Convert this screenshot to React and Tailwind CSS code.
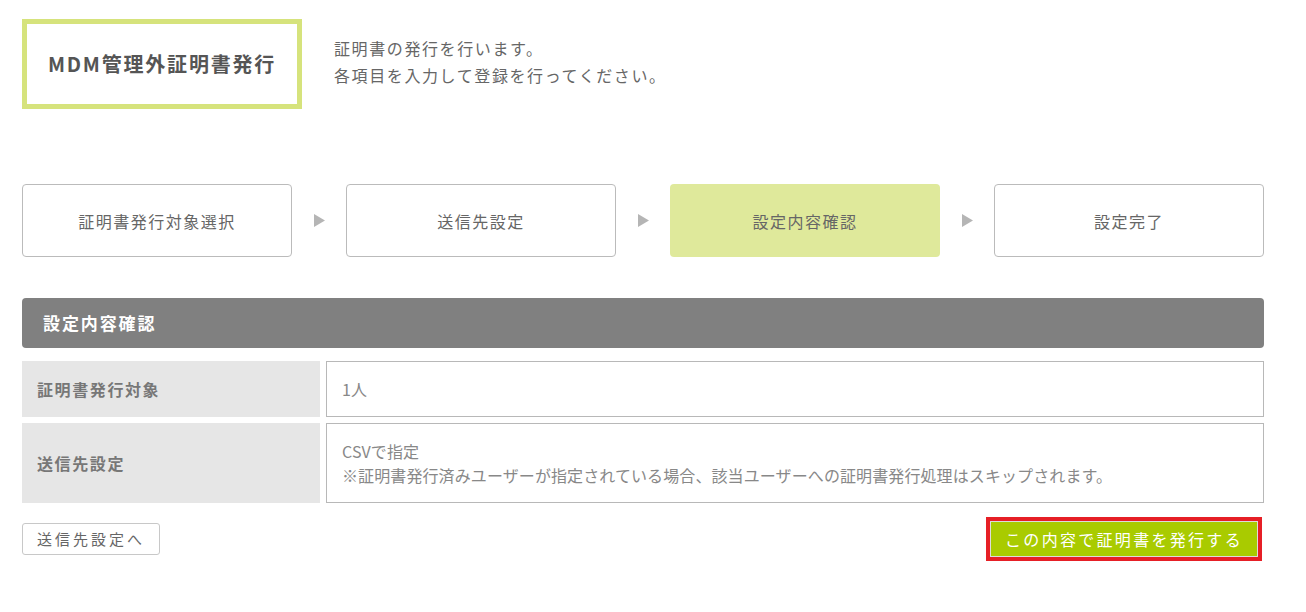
const STEPS = [
  { label: '証明書発行対象選択' },
  { label: '送信先設定' },
  { label: '設定内容確認', active: true },
  { label: '設定完了' },
]

function StepArrow() {
  return (
    <div className="w-[54px] flex justify-center">
      <svg width="11" height="13" viewBox="0 0 11 13">
        <path d="M0 0 L11 6.5 L0 13 Z" fill="#b5b5b5" />
      </svg>
    </div>
  )
}

export default function App() {
  return (
    <div className="min-h-screen bg-white pl-[22px] pt-[19px] font-['Noto_Sans_CJK_JP',sans-serif]">
      <div className="w-[1242px]">
        {/* Header */}
        <div className="flex items-start">
          <div className="w-[280px] h-[90px] border-[5px] border-[#d6e37c] flex items-center justify-center">
            <h1 className="text-[20px] font-bold text-[#555] tracking-[1.8px]">MDM管理外証明書発行</h1>
          </div>
          <div className="ml-[32px] pt-[16px] text-[16px] leading-[27px] tracking-[1.6px] text-[#666]">
            <p>証明書の発行を行います。</p>
            <p>各項目を入力して登録を行ってください。</p>
          </div>
        </div>

        {/* Steps */}
        <div className="flex items-center mt-[75px]">
          {STEPS.map((s, i) => (
            <div key={s.label} className="flex items-center">
              {i > 0 && <StepArrow />}
              <div className={`w-[270px] h-[73px] rounded-[4px] flex items-center justify-center text-[16px] tracking-[1.5px] text-[#666] ${s.active ? 'bg-[#dfe99b]' : 'border border-[#bbb] bg-white'}`}>
                {s.label}
              </div>
            </div>
          ))}
        </div>

        {/* Confirm section */}
        <div className="mt-[41px] h-[50px] rounded-[4px] bg-[#808080] flex items-center pl-[21px]">
          <h2 className="text-[17px] font-bold text-white tracking-[1.9px]">設定内容確認</h2>
        </div>

        <div className="mt-[13px] flex flex-col gap-[6px]">
          <div className="flex gap-[6px] h-[56px]">
            <div className="w-[298px] bg-[#e6e6e6] flex items-center pl-[15px] text-[16px] font-bold text-[#777] tracking-[1.6px]">証明書発行対象</div>
            <div className="flex-1 border border-[#b8b8b8] flex items-center pl-[15px] text-[16px] text-[#888]">1人</div>
          </div>
          <div className="flex gap-[6px] h-[80px]">
            <div className="w-[298px] bg-[#e6e6e6] flex items-center pl-[15px] text-[16px] font-bold text-[#777] tracking-[1.6px]">送信先設定</div>
            <div className="flex-1 border border-[#b8b8b8] flex flex-col justify-center pl-[15px] text-[16px] leading-[24px] text-[#888] tracking-[0.1px]">
              <p>CSVで指定</p>
              <p>※証明書発行済みユーザーが指定されている場合、該当ユーザーへの証明書発行処理はスキップされます。</p>
            </div>
          </div>
        </div>

        {/* Actions */}
        <div className="mt-[14px] flex justify-between items-start">
          <button className="mt-[6px] w-[138px] h-[32px] border border-[#c8c8c8] rounded-[3px] bg-white text-[15px] tracking-[3px] text-[#666] flex items-center justify-center">
            送信先設定へ
          </button>
          <div className="mr-[2px] border-4 border-[#e61f26]">
            <button className="w-[268px] h-[36px] border border-[#dcdcdc] bg-[#a9cb00] text-[16px] tracking-[2.3px] text-white flex items-center justify-center">
              この内容で証明書を発行する
            </button>
          </div>
        </div>
      </div>
    </div>
  )
}
